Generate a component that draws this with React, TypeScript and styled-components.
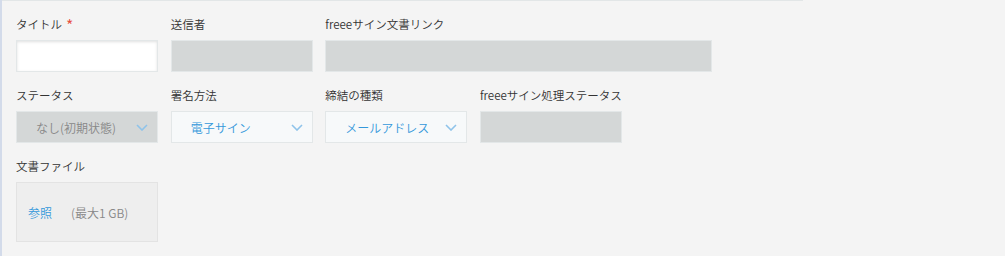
import React from "react";
import styled, { createGlobalStyle } from "styled-components";

const Global = createGlobalStyle`
  html, body { margin: 0; padding: 0; background: #f5f5f5; }
  body { font-family: "Noto Sans CJK JP", "Noto Sans", sans-serif; }
`;

const Page = styled.div`
  position: relative;
  min-height: 256px;
  box-sizing: border-box;
  border-left: 2px solid #d3dbea;
  background: #f4f4f4;
  padding: 16px 0 0 14px;
  display: flex;
  flex-direction: column;
  gap: 15px;
`;

const TopLine = styled.div`
  position: absolute;
  top: 0;
  left: 0;
  width: 801px;
  height: 1px;
  background: #e2e6e7;
`;

const Row = styled.div`
  display: flex;
  gap: 12.67px;
`;

const Field = styled.div`
  display: flex;
  flex-direction: column;
  gap: 8px;
`;

const Label = styled.div`
  height: 16px;
  line-height: 16px;
  font-size: 11.5px;
  font-weight: 350;
  color: #333;
  white-space: nowrap;
  display: flex;
  align-items: center;
`;

const Required = styled.span`
  color: #e74c3c;
  font-size: 16px;
  margin-left: 4px;
  position: relative;
  top: 1px;
`;

type BoxProps = { $w?: number; $h?: number };

const TextInput = styled.div<BoxProps>`
  box-sizing: border-box;
  width: ${(p) => p.$w ?? 142}px;
  height: ${(p) => p.$h ?? 32}px;
  border: 1px solid #e3e7e8;
  background: #fff;
  box-shadow: inset 0 1px 3px rgba(0, 0, 0, 0.12);
`;

const ReadOnly = styled.div<BoxProps>`
  box-sizing: border-box;
  width: ${(p) => p.$w ?? 142}px;
  height: ${(p) => p.$h ?? 32}px;
  border: 1px solid #e3e7e8;
  background: #d4d7d7;
`;

const Select = styled.div<{ $disabled?: boolean }>`
  box-sizing: border-box;
  width: 142px;
  height: 32px;
  border: 1px solid #e3e7e8;
  background: ${(p) => (p.$disabled ? "#d4d7d7" : "#f7f9fa")};
  display: flex;
  align-items: center;
  justify-content: space-between;
  padding: 0 9px 0 19px;
  font-size: 12px;
  font-weight: 350;
  color: ${(p) => (p.$disabled ? "#888" : "#3498db")};
`;

const FileBox = styled.div`
  box-sizing: border-box;
  width: 142px;
  height: 60px;
  border: 1px solid #e3e3e3;
  background: #eeeeee;
  display: flex;
  align-items: center;
  padding: 0 0 0 11px;
  font-size: 12px;
  font-weight: 350;
  gap: 19px;
`;

const Browse = styled.span`
  color: #3498db;
`;

const Limit = styled.span`
  color: #888;
`;

const Chevron = () => (
  <svg width="12" height="7" viewBox="0 0 12 7" fill="none">
    <path d="M1 1l5 5 5-5" stroke="#8fc3ea" strokeWidth="1.6" />
  </svg>
);

export default function App() {
  return (
    <>
      <Global />
      <Page>
        <TopLine />
        <Row>
          <Field>
            <Label>
              タイトル<Required>*</Required>
            </Label>
            <TextInput />
          </Field>
          <Field>
            <Label>送信者</Label>
            <ReadOnly />
          </Field>
          <Field>
            <Label>freeeサイン文書リンク</Label>
            <ReadOnly $w={387} />
          </Field>
        </Row>
        <Row>
          <Field>
            <Label>ステータス</Label>
            <Select $disabled>
              <span>なし(初期状態)</span>
              <Chevron />
            </Select>
          </Field>
          <Field>
            <Label>署名方法</Label>
            <Select>
              <span>電子サイン</span>
              <Chevron />
            </Select>
          </Field>
          <Field>
            <Label>締結の種類</Label>
            <Select>
              <span>メールアドレス</span>
              <Chevron />
            </Select>
          </Field>
          <Field>
            <Label>freeeサイン処理ステータス</Label>
            <ReadOnly />
          </Field>
        </Row>
        <Row>
          <Field>
            <Label>文書ファイル</Label>
            <FileBox>
              <Browse>参照</Browse>
              <Limit>(最大1 GB)</Limit>
            </FileBox>
          </Field>
        </Row>
      </Page>
    </>
  );
}
